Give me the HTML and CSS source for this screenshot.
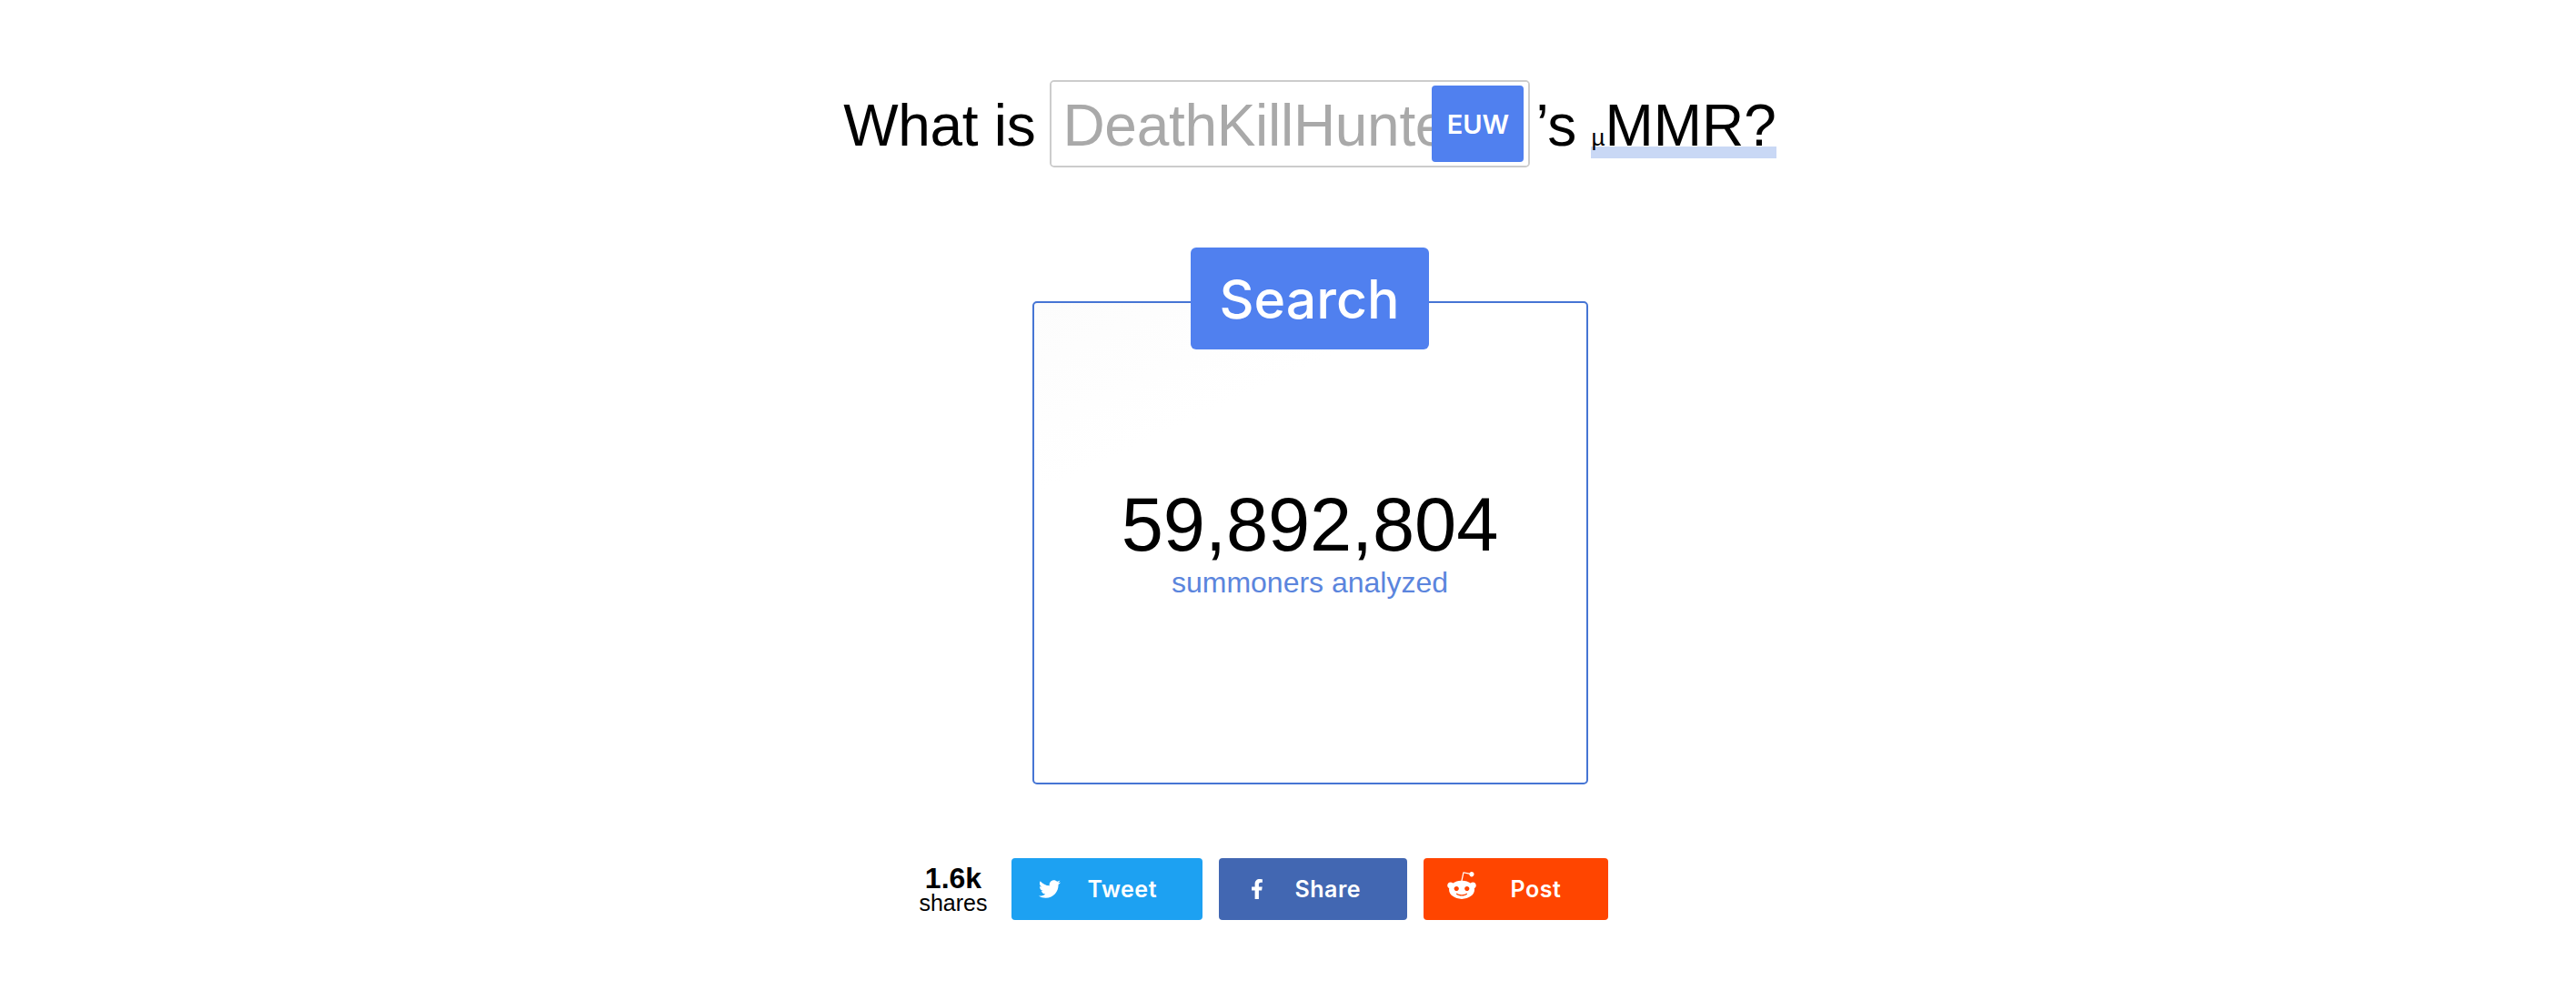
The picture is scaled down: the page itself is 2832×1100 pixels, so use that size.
FILE: index.html
```html
<!DOCTYPE html>
<html lang="en">
<head>
<meta charset="utf-8">
<title>What is my MMR?</title>
<link rel="stylesheet" href="styles.css">
</head>
<body>
<main class="page">
  <h1 class="question">
    <span class="lead">What is</span>
    <span class="field">
      <input class="name" type="text" placeholder="DeathKillHunter" aria-label="Summoner name">
      <button class="region" type="button">EUW</button>
    </span>
    <span class="tail">’s <span class="mark"><small class="mu">µ</small>MMR?</span></span>
  </h1>
  <section class="panel">
    <button class="search" type="button">Search</button>
    <div class="stat">
      <div class="count">59,892,804</div>
      <div class="label">summoners analyzed</div>
    </div>
  </section>
  <div class="social">
    <div class="shares"><b>1.6k</b><span>shares</span></div>
    <a class="btn tweet">
      <svg class="ico i-tw" viewBox="0 0 512 512"><path d="M459.37 151.716c.325 4.548.325 9.097.325 13.645 0 138.72-105.583 298.558-298.558 298.558-59.452 0-114.68-17.219-161.137-47.106 8.447.974 16.568 1.299 25.34 1.299 49.055 0 94.213-16.568 130.274-44.832-46.132-.975-84.792-31.188-98.112-72.772 6.498.974 12.995 1.624 19.818 1.624 9.421 0 18.843-1.3 27.614-3.573-48.081-9.747-84.143-51.98-84.143-102.985v-1.299c13.969 7.797 30.214 12.67 47.431 13.319-28.264-18.843-46.781-51.005-46.781-87.391 0-19.492 5.197-37.36 14.294-52.954 51.655 63.675 129.3 105.258 216.365 109.807-1.624-7.797-2.599-15.918-2.599-24.04 0-57.828 46.782-104.934 104.934-104.934 30.213 0 57.502 12.67 76.67 33.137 23.715-4.548 46.456-13.32 66.599-25.34-7.798 24.366-24.366 44.833-46.132 57.827 21.117-2.273 41.584-8.122 60.426-16.243-14.292 20.791-32.161 39.308-52.628 54.253z"/></svg>
      <span>Tweet</span>
    </a>
    <a class="btn fb">
      <svg class="ico i-fb" viewBox="0 0 320 512"><path d="M279.14 288l14.22-92.66h-88.91v-60.13c0-25.35 12.42-50.06 52.24-50.06h40.42V6.26S260.43 0 225.36 0c-73.22 0-121.08 44.38-121.08 124.72v70.62H22.89V288h81.39v224h100.17V288z"/></svg>
      <span>Share</span>
    </a>
    <a class="btn reddit">
      <svg class="ico i-rd" viewBox="0 0 512 512"><path d="M440.3 203.5c-15 0-28.2 6.2-37.9 15.9-35.7-24.7-83.8-40.6-137.1-42.3L293 52.3l88.2 19.8c0 21.6 17.6 39.2 39.2 39.2 22 0 39.7-18.1 39.7-39.7s-17.6-39.7-39.7-39.7c-15.4 0-28.7 9.3-35.3 22l-97.4-21.6c-4.9-1.3-9.7 2.2-11 7.1L246.3 177c-52.9 2.2-100.5 18.1-136.3 42.8-9.7-10.1-23.4-16.3-38.4-16.3-55.6 0-73.8 74.6-22.9 100.1-1.8 7.9-2.6 16.3-2.6 24.7 0 83.8 94.4 151.7 210.3 151.7 116.4 0 210.8-67.9 210.8-151.7 0-8.4-.9-17.2-3.1-25.1 49.9-25.6 31.5-99.7-23.8-99.7zM129.4 308.9c0-22 17.6-39.7 39.7-39.7 21.6 0 39.2 17.6 39.2 39.7 0 21.6-17.6 39.2-39.2 39.2-22 .1-39.7-17.6-39.7-39.2zm214.3 93.5c-36.4 36.4-139.1 36.4-175.5 0-4-3.5-4-9.7 0-13.7 3.5-3.5 9.7-3.5 13.2 0 27.8 28.5 120 29 149 0 3.5-3.5 9.7-3.5 13.2 0 4.1 4 4.1 10.2.1 13.7zm-.8-54.2c-21.6 0-39.2-17.6-39.2-39.2 0-22 17.6-39.7 39.2-39.7 22 0 39.7 17.6 39.7 39.7-.1 21.5-17.7 39.2-39.7 39.2z"/></svg>
      <span>Post</span>
    </a>
  </div>
</main>
</body>
</html>
```
FILE: styles.css
```css
* { box-sizing: border-box; }
html, body { margin: 0; padding: 0; background: #fff; }
body { font-family: "Liberation Sans", Arial, sans-serif; color: #000; overflow: hidden; }
.page {
  width: 2832px;
  height: 1100px;
  padding: 88px 0 0 48px;
  display: flex;
  flex-direction: column;
  align-items: center;
}
.question {
  margin: 0;
  height: 96px;
  display: flex;
  align-items: center;
  gap: 16px;
  font-size: 64px;
  font-weight: 400;
  line-height: 1;
  letter-spacing: -0.3px;
  white-space: nowrap;
}
.lead { padding-top: 4px; }
.field {
  position: relative;
  width: 528px;
  height: 96px;
  border: 2px solid #ccc;
  border-radius: 5px;
  display: block;
  overflow: hidden;
}
.name {
  width: 100%;
  height: 100%;
  border: 0;
  outline: 0;
  padding: 4px 106px 0 12px;
  font: 400 64px "Liberation Sans", Arial, sans-serif;
  letter-spacing: -0.3px;
  background: #fff;
  color: #000;
}
.name::placeholder { color: #a9a9a9; opacity: 1; }
.region {
  position: absolute;
  right: 5px;
  top: 4px;
  width: 101px;
  height: 84px;
  border: 0;
  border-radius: 4px;
  padding: 0;
  background: #5080ef;
  color: #fff;
  font: 600 29px Inter, sans-serif;
  letter-spacing: 0;
}
.tail { margin-left: -10px; padding-top: 8px; }
.mu { font-size: 26px; }
.mark {
  display: inline-block;
  height: 68px;
  line-height: 64px;
  letter-spacing: 0;
  margin-left: -1px;
  background: linear-gradient(to bottom, transparent 0, transparent calc(100% - 13px), #c9d8f5 calc(100% - 13px), #c9d8f5 100%);
}
.panel {
  position: relative;
  margin-top: 147px;
  width: 611px;
  height: 531px;
  border: 2px solid #4675d4;
  border-radius: 5px;
  background: linear-gradient(155deg, #fcfcfc 0, #fff 26%);
  display: flex;
  align-items: center;
  justify-content: center;
}
.search {
  position: absolute;
  top: -61px;
  left: 172px;
  width: 262px;
  height: 112px;
  border: 0;
  border-radius: 6px;
  padding: 0;
  background: #5080ef;
  color: #fff;
  font: 500 59px Inter, sans-serif;
}
.stat { text-align: center; margin-top: -5px; }
.count { font-size: 83px; line-height: 92px; letter-spacing: -0.1px; }
.label { font-size: 32px; line-height: 34px; color: #5b85dd; }
.social {
  margin: 81px 102px 0 0;
  display: flex;
  align-items: stretch;
  gap: 18px;
  height: 68px;
}
.shares { display: flex; flex-direction: column; align-items: center; justify-content: center; margin-right: 8px; }
.shares b { font-size: 32px; line-height: 30px; }
.shares span { font-size: 25px; line-height: 24px; }
.btn {
  display: flex;
  align-items: center;
  height: 68px;
  border-radius: 4px;
  color: #fff;
  font: 600 25px Inter, sans-serif;
  letter-spacing: 0.5px;
}
.ico { fill: #fff; display: block; flex: none; }
.tweet { width: 210px; background: #1da1f2; padding-left: 30px; }
.fb { width: 207px; background: #4267b2; padding-left: 35px; }
.reddit { width: 203px; background: #ff4500; padding-left: 25px; }
.i-tw { width: 24px; height: 24px; margin-right: 30px; }
.i-fb { width: 14px; height: 22px; margin-right: 35px; }
.i-rd { width: 34px; height: 34px; margin-right: 37px; margin-top: -8px; }
```
